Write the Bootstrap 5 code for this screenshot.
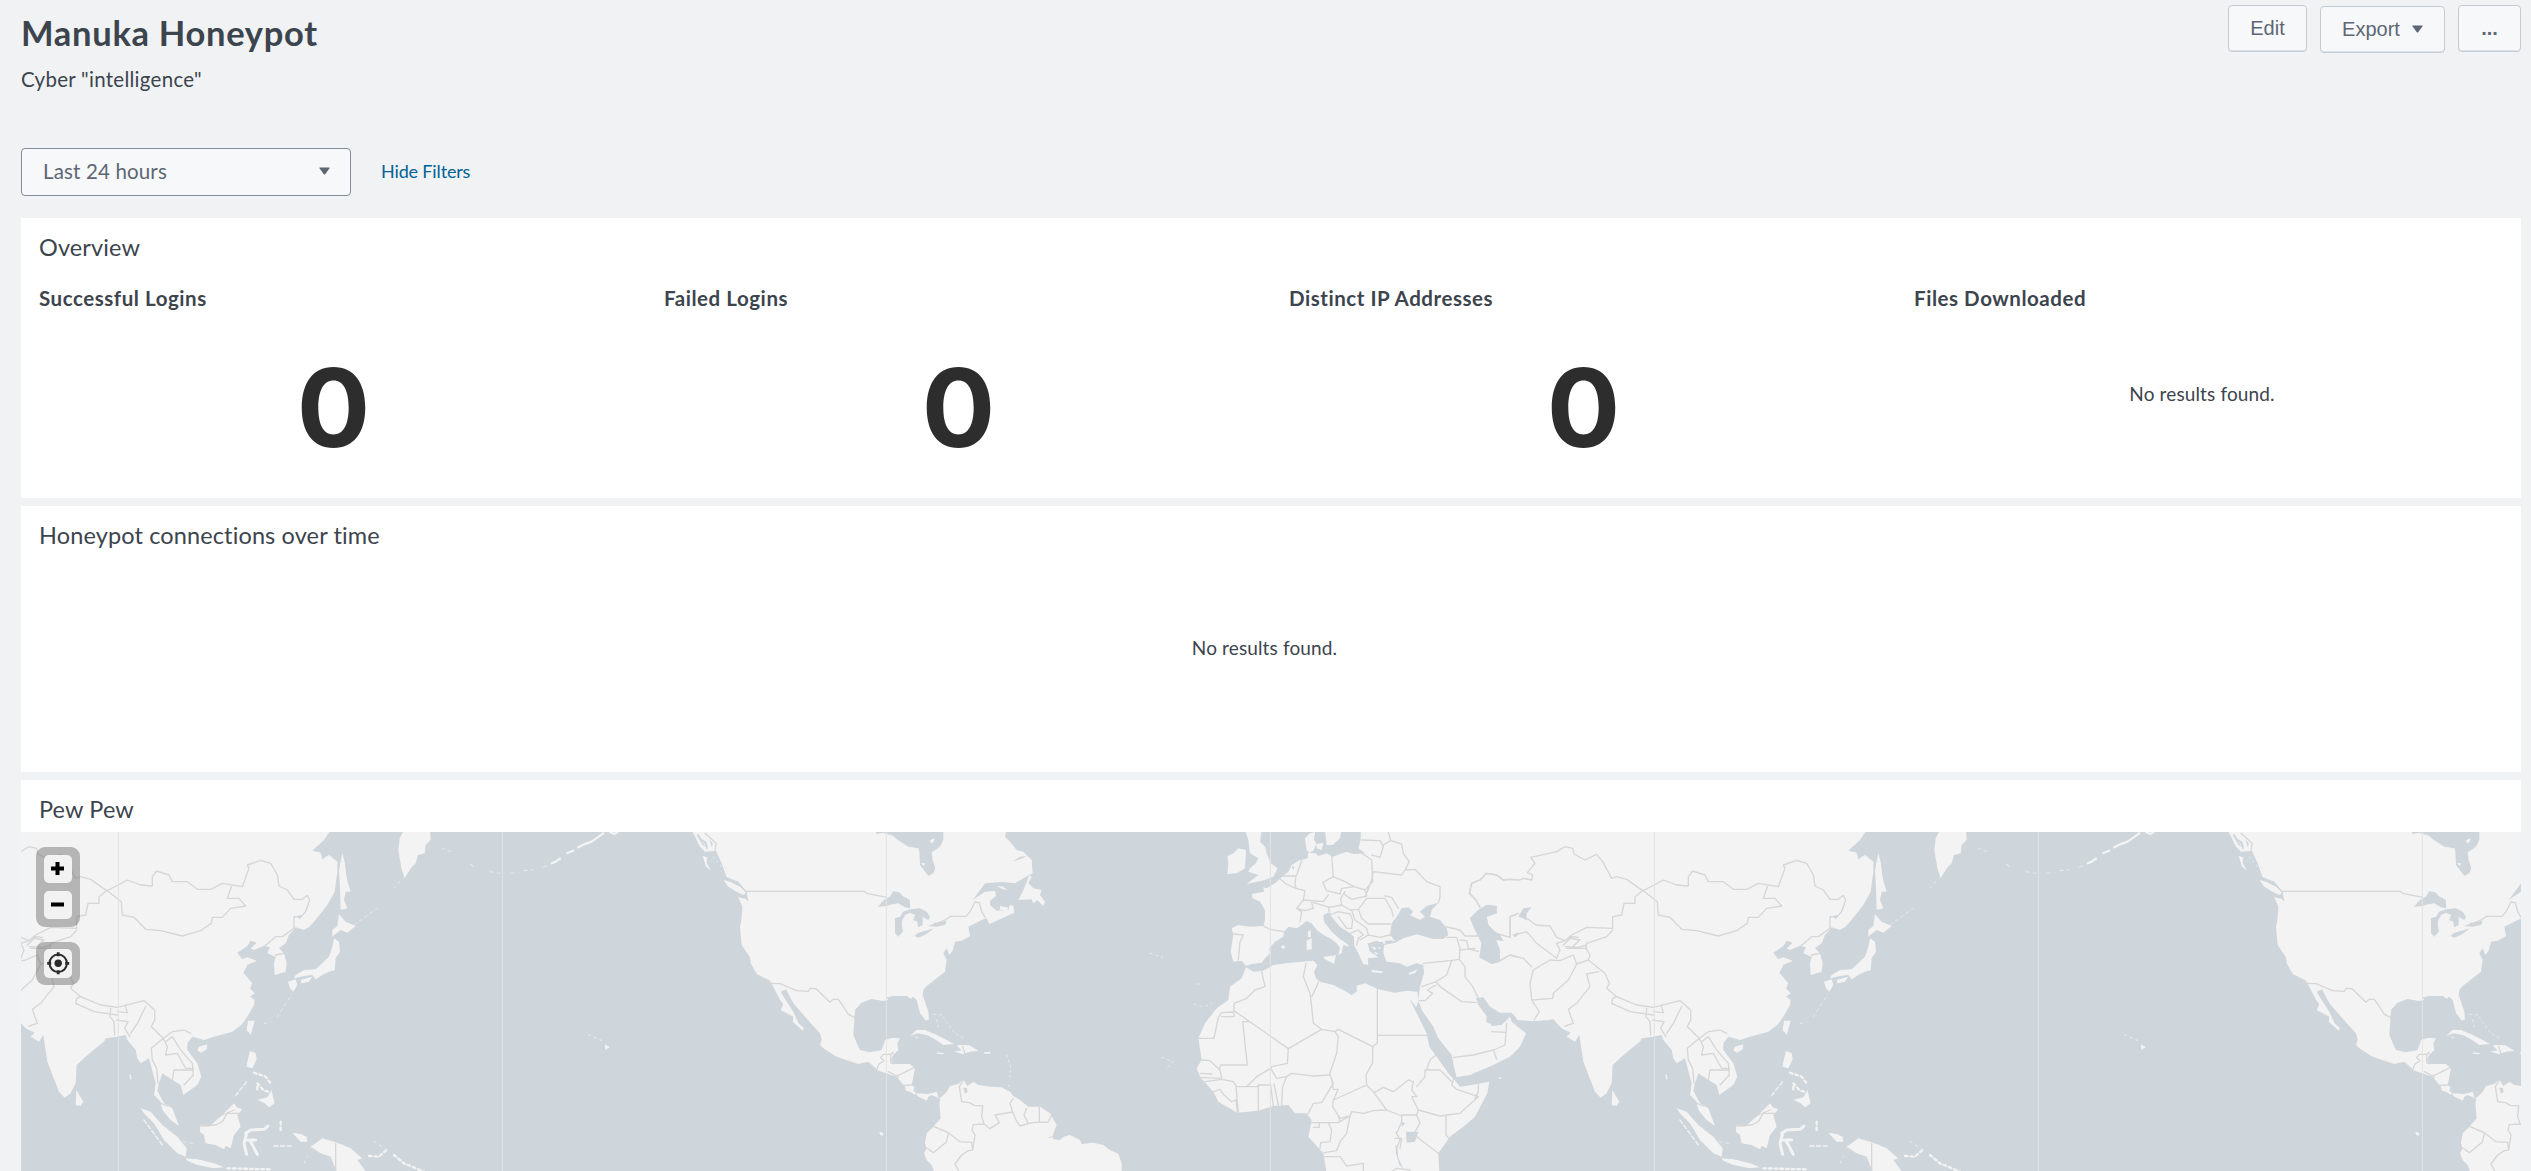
<!DOCTYPE html>
<html lang="en">
<head>
<meta charset="utf-8">
<title>Manuka Honeypot</title>
<link rel="stylesheet" href="https://cdn.jsdelivr.net/npm/bootstrap@5.3.0/dist/css/bootstrap.min.css">
<style>
body{background:#f0f2f4;color:#3c444d;font-family:Lato,"Open Sans",sans-serif;height:1171px;overflow:hidden;font-size:20px;font-variant-ligatures:none}
.dash{padding:0 10px 0 21px;height:1171px}
.dash-top{height:148px}
.dash-title{font-size:34.5px;line-height:40px;font-weight:700;padding-top:13px;margin:0;letter-spacing:.7px}
.dash-desc{font-size:20.5px;line-height:26px;margin:13px 0 0;letter-spacing:.27px}
.tools{gap:13px;padding-top:5px}
.tool-btn{height:47px;border:1px solid #c3cbd4;border-radius:4px;background:#f7f8fa;color:#5c6773;font-family:"Liberation Sans",Arial,sans-serif;font-size:20px;line-height:26px;padding:0 0 2px;box-shadow:inset 0 -1px 0 #dfe3e8}
.w-edit{width:79px}.w-export{width:125px;margin-top:1px}.w-more{width:63px;font-weight:700}
.tri{width:11px;height:8px;fill:#5c6773;display:block}
.range{width:330px;height:48px;border:1px solid #818d99;border-radius:4px;background:#f7f8fa;color:#5c6773;font-size:20.5px;padding:0 20px 2px 21px;letter-spacing:.15px}
.hide-link{color:#006297;font-size:18px;line-height:26px;margin:0 0 2px 30px;text-decoration:none;letter-spacing:-.15px}
.panel{background:#fff}
.panel-name{font-size:23.5px;line-height:30px;font-weight:400;margin:0;padding:14px 18px 0;letter-spacing:.13px}
.p-one{height:280px;margin-top:22px}.p-two{height:266px;margin-top:8px}.p-three{margin-top:8px}
.metric-name{font-size:20.5px;line-height:26px;font-weight:700;margin:0;padding:23px 18px 1px;letter-spacing:.55px}
.big{font:700 109px/110px Inter,sans-serif;color:#2d2d2d;padding-top:40px}
.none{font-size:19px;line-height:26px;letter-spacing:.13px}
.m-none{padding-top:69px;padding-right:13px}
.t-none{padding-top:85px;padding-right:13px}
.map-box{height:339px;margin-top:8px;background:#ced5db;position:relative}
.map-box>svg{display:block}
.ctl{position:absolute;left:15px;width:44px;border-radius:9px;background:rgba(110,110,110,.47);padding:8px;display:flex;flex-direction:column;gap:8px}
.c-zoom{top:15px;height:80px}.c-loc{top:110px;height:43px;padding-top:7px}
.ctl button{width:28px;height:28px;padding:0;border:0;border-radius:5px;background:rgba(247,247,247,.92);display:block}
.c-loc button{height:29px}
.ctl svg{display:block}
</style>
</head>
<body>
<main class="dash d-flex flex-column">
  <header class="dash-top d-flex justify-content-between align-items-start">
    <div><h1 class="dash-title">Manuka Honeypot</h1><p class="dash-desc">Cyber "intelligence"</p></div>
    <div class="tools d-flex">
      <button class="tool-btn w-edit">Edit</button>
      <button class="tool-btn w-export d-flex align-items-center justify-content-center gap-2">Export <svg class="tri ms-1" viewBox="0 0 11 8"><path d="M.8.5h9.4q.8 0 .3.8L6.2 7.2q-.7.8-1.4 0L.5 1.3Q0 .5.8.5Z"/></svg></button>
      <button class="tool-btn w-more">...</button>
    </div>
  </header>
  <div class="d-flex align-items-center">
    <button class="range d-flex align-items-center justify-content-between">Last 24 hours<svg class="tri" viewBox="0 0 11 8"><path d="M.8.5h9.4q.8 0 .3.8L6.2 7.2q-.7.8-1.4 0L.5 1.3Q0 .5.8.5Z"/></svg></button>
    <a class="hide-link" href="#">Hide Filters</a>
  </div>
  <section class="panel p-one">
    <h2 class="panel-name">Overview</h2>
    <div class="row g-0">
      <div class="col-3"><h3 class="metric-name">Successful Logins</h3><div class="big text-center">0</div></div>
      <div class="col-3"><h3 class="metric-name">Failed Logins</h3><div class="big text-center">0</div></div>
      <div class="col-3"><h3 class="metric-name">Distinct IP Addresses</h3><div class="big text-center">0</div></div>
      <div class="col-3"><h3 class="metric-name">Files Downloaded</h3><div class="none m-none text-center">No results found.</div></div>
    </div>
  </section>
  <section class="panel p-two d-flex flex-column">
    <h2 class="panel-name">Honeypot connections over time</h2>
    <div class="none t-none text-center">No results found.</div>
  </section>
  <section class="panel p-three">
    <h2 class="panel-name">Pew Pew</h2>
    <div class="map-box">
      <svg width="2500" height="339" viewBox="21 832 2500 339">
        <defs>
          <g id="world" stroke-linejoin="round" stroke-linecap="round">
            <!-- Americas -->
            <g transform="translate(680 820) scale(.33333)">
              <path fill="#f3f3f3" d="M35 30 60 80 75 95 108 92 125 130 140 172 175 185 200 215 205 245 196 236 175 232 187 260 184 300 180 320 185 375 210 412 212 430 230 462 270 482 290 520 300 540 310 552 302 570 340 590 338 605 350 615 368 632 372 625 355 608 340 575 320 545 302 515 318 508 330 530 340 550 375 590 420 640 425 660 420 675 430 685 470 710 535 732 565 725 595 752 650 770 675 800 678 812 690 815 712 828 740 842 745 830 755 825 770 832 780 840 778 850 782 895 760 920 740 940 735 970 740 985 732 1000 740 1020 755 1035 765 1060 1325 1060 1325 1030 1315 1002 1290 990 1270 975 1240 968 1205 972 1200 960 1170 945 1150 950 1140 960 1120 958 1118 945 1130 915 1110 880 1080 860 1045 860 1020 840 1000 828 990 815 965 802 930 800 895 795 880 786 862 798 850 778 835 792 810 798 800 815 785 830 778 835 770 815 745 822 710 820 700 812 703 800 695 795 700 770 705 745 690 732 640 732 632 720 640 705 655 690 652 670 660 655 635 654 615 660 605 690 570 697 540 690 535 680 520 645 525 570 545 548 575 537 610 543 625 540 620 532 640 528 680 528 692 536 700 530 710 540 715 560 720 580 738 602 747 598 745 575 728 525 730 510 740 498 795 455 800 420 790 400 800 385 808 405 818 392 825 365 845 362 870 348 865 320 910 298 920 295 928 312 955 300 1003 278 1000 258 990 255 985 270 950 272 930 255 930 242 948 228 945 212 915 215 870 245 860 262 882 235 915 190 965 186 1005 190 1030 175 1058 160 1055 120 1030 95 1010 90 990 65 975 50 980 30 790 30 790 60 780 80 755 97 758 120 766 145 760 160 745 168 720 135 718 95 715 85 685 80 650 58 640 48 610 38 590 42 585 30Z"/>
              <g fill="#f3f3f3"><path d="M130 180 150 185 180 200 198 218 190 225 170 215 145 200ZM68 108 82 112 80 130 94 152 78 140ZM1048 165 1055 170 1045 190 1060 205 1085 210 1080 225 1095 245 1090 258 1072 240 1060 250 1055 238 1015 240 1028 215ZM950 197 970 200 982 210 965 206ZM960 258l25 5-4 8-22-2ZM750 60l14-5-3 10-8 6ZM722 130l14 0-5 8ZM690 648 710 630 735 630 770 645 800 660 822 672 790 675 760 655 740 645 712 640ZM770 697l25 3-10 3-13-2ZM830 675 868 676 895 692 870 695 848 703 822 694 845 692ZM912 696l20 0-2 6-16-1ZM705 650l8 0-2 6ZM598 936l12 2-2 10-8-4Z"/>
              <path fill="none" stroke="#e6e9eb" stroke-width="3" stroke-dasharray="6 10" d="M762 583 785 585 820 635 850 655M770 600l5 20M980 705 992 740 990 770M985 795l4 8M100 110l25 30 20 5"/></g>
              <g fill="#ced5db"><path d="M593 260 612 240 630 230 640 213 660 218 668 228 690 240 690 265 675 262 655 250 640 252 620 258ZM645 295 660 290 670 275 690 268 720 265 740 275 750 290 745 300 728 290 728 315 714 322 712 305 700 300 705 285 690 278 675 285 665 305 668 335 655 350 645 340ZM703 348 715 338 745 330 762 325 740 342 715 353ZM750 318 765 308 800 302 795 315 770 320ZM1000 124 1020 110 1040 108 1020 118ZM850 803l10 0 3 12-8 6ZM1102 955l16-8 0 5ZM50 45l6-3 20 38-8-5ZM62 55l18 12 4 20-4 1-6-17ZM88 60l10 10-2 12-4-10Z"/></g>
              <g fill="none" stroke="#d6d6d6" stroke-width="4"><path d="M198 214H553L560 220 620 232M270 490 300 491 350 512 385 514 390 505 408 506 450 547 460 538 475 538 490 560 505 583 524 592M750 318 795 300 812 289 858 289 870 275 885 246 898 248 905 275 915 292M75 40 108 70 105 95M590 750 597 732 612 723 602 712 610 703 632 703 632 728 640 732M632 703 640 698M625 755 650 768 672 758 704 742M650 768 655 772M672 796 697 795M708 815 710 828M848 680 855 702M850 780 838 800 845 845 868 848 885 857 908 857 905 890 912 912 880 914 876 930 885 945 878 990 865 992 845 1005 825 1032 840 1060M912 912 930 926 958 908 945 885 998 876 990 850 1000 835M998 876 1008 900 1020 918 1055 908 1105 906 1115 885M1040 865 1032 885 1045 910M1078 862 1078 905M762 920 805 938 840 965 875 967 878 990M805 938 800 965 760 998 742 985M775 828 780 840"/></g>
            </g>
            <!-- Europe, Africa, Middle East -->
            <g transform="translate(1150 820) scale(.33333)">
              <g fill="#f3f3f3">
              <path d="M632 30V60L625 85 645 100 610 102 590 95 548 110 530 100 505 108 497 100 478 98 470 90 465 55 480 40 495 36 492 60 500 72 490 92 475 98 472 115 445 122 425 135 415 155 395 172 375 190 350 205 340 202 342 215 305 222 308 235 330 245 345 270 345 300 340 318 300 320 265 315 245 325 250 345 242 395 250 425 275 422 288 438 305 432 335 428 345 415 360 400 358 385 375 365 400 350 402 335 415 320 440 325 455 315 470 303 485 310 500 330 520 345 540 355 560 370 570 385 565 405 575 400 580 375 598 380 590 370 570 358 545 335 522 305 520 285 535 278 545 290 570 320 600 340 612 350 612 375 625 400 640 432 655 435 653 415 685 412 665 390 655 370 680 362 700 372 735 362 720 345 725 310 740 290 755 265 775 262 790 275 780 285 810 300 825 290 810 275 830 258 865 248 845 270 840 290 870 300 890 325 895 345 880 357 850 357 800 343 760 355 735 368 702 375 700 400 710 425 750 430 770 440 800 430 820 435 822 460 810 500 805 540 815 570 850 620 865 655 905 705 912 740 920 772 960 765 1030 735 1080 710 1110 680 1128 640 1105 622 1085 605 1080 590 1055 615 1025 618 1015 595 985 555 978 535 1000 532 1020 560 1050 578 1085 578 1100 595 1150 602 1200 600V30Z"/>
              <path d="M288 442 310 455 340 452 370 435 420 428 490 422 502 435 492 455 498 475 510 485 550 495 580 510 605 525 620 515 620 497 645 490 685 508 735 518 770 512 802 515 806 545 798 562 792 552 778 535 795 570 830 640 838 680 860 710 895 760 918 785 930 800 960 796 1018 785 1012 820 975 890 940 920 900 950 865 1000 868 1060 530 1060 520 1000 475 950 485 900 470 880 435 880 415 855 370 858 325 872 262 878 205 845 190 815 150 770 140 745 155 720 145 655 165 610 200 565 235 540 240 500 275 475ZM285 30H335L330 65 345 80 350 100 362 130 383 145 370 170 345 180 290 192 325 165 295 155 300 145 318 130 325 115 300 100 295 60ZM265 85 288 90 285 145 260 160 232 162 235 130 232 108 250 100ZM525 30H575L570 55 548 75 530 75ZM500 72 520 68 515 90 500 85ZM470 362 485 355 485 388 470 390ZM474 335 482 330 482 352 474 350ZM520 410 558 406 552 432 525 418ZM665 450 698 454 695 460 665 456ZM775 460 803 448 795 460 778 464ZM393 380l8-4 5 6-8 6ZM1045 772l12 2-8 4ZM700 392l8 5-6 3ZM420 375l8 1Z"/>
              <path fill="none" stroke="#e6e9eb" stroke-width="3" stroke-dasharray="7 11" d="M133 552 160 562 185 550M140 492h8M35 712 70 725 52 742M0 400l38 12"/></g>
              <path fill="#ced5db" d="M960 295 985 270 1010 255 1040 258 1040 280 1010 290 1015 315 1035 335 1050 345 1060 362 1038 360 1050 390 1050 425 1025 432 988 412 995 370 975 330ZM1105 290 1120 265 1145 262 1130 280 1128 302 1118 295ZM1090 348l12-10 4 4-8 8ZM652 370 700 365 698 405 685 412 660 395ZM705 362l25-1-8 8-16 0ZM768 935 805 935 800 950 795 965 770 968ZM755 905 765 910 755 922ZM736 975 742 980 745 1015 760 1045 748 1035 738 1000ZM735 935h6l0 10ZM425 138l8 2-3 12ZM1010 590 1022 596 1020 612 1008 605Z"/>
              <path fill="#f3f3f3" d="M662 378l18 6-6 6ZM672 396l14 4-8 4ZM685 380l8 4-6 4Z"/>
              <g fill="none" stroke="#d6d6d6" stroke-width="4"><path d="M388 175 408 192 438 205 465 212 460 240 440 265 455 275 450 305M395 168 438 168 435 190 438 205M455 122 440 165M545 108 550 170 518 188 530 212 570 222 575 205 612 200 645 210 668 185 665 120 625 92M550 170 585 185 612 200M460 240 520 245 535 225M440 265 465 272 490 265 485 248M490 248 540 262 575 255 572 235 585 215M645 210 650 228 605 238 582 222M575 255 600 270 625 268 650 235 705 235 725 270 730 290M705 228 725 232 745 265M625 268 635 295 655 312 722 312M535 262 540 285 565 275 600 282 608 300 605 325 590 325 565 290M605 270 615 300 650 325 655 345 690 352 720 345M600 340 625 330 640 345 625 355 620 375M655 345 630 360M340 318 360 328 402 335M250 342 280 345 270 365 265 420M635 60 690 62 700 80 690 112 665 105M715 36 722 62 755 72 760 100 778 125 765 150 755 165 670 155M722 62 700 75M765 150 795 148 830 185 870 200 870 232 865 248M670 155 665 180 648 225M878 318 930 330 945 348 990 348M890 352 920 352 930 385 928 418 900 422 820 430M930 360 950 362 955 385 985 395M930 390 950 388 975 385M928 418 945 440 945 470 968 500 985 535M905 422 890 465 858 485 815 500M858 485 870 500 935 545 978 548M858 495 832 510 848 520 825 542 808 542M1025 635 1068 637 1070 610M1068 637 1065 675 1030 690 970 705 910 712M1030 690 1040 718M990 262 978 240 958 220 965 190 990 180 1010 160 1040 165 1060 180 1080 178 1110 180 1120 175 1145 180 1132 158 1155 130 1142 112 1200 100M1080 352V290L1110 280M1080 352 1040 340M1130 295 1160 318 1200 320M1100 340 1130 335 1160 370 1200 400M1050 422 1080 405 1120 415 1148 440 1200 420M1148 445 1138 490 1145 540 1200 540M1145 540 1168 575 1155 600"/>
              <path d="M335 455 345 500 315 510 290 535 252 550V590H215M145 655H192L205 592 215 578 250 576M252 572 415 686 515 628 490 610 485 560 480 520 460 470 468 430M485 530 500 500 505 485M515 628 555 635 565 628 668 680V728L648 765 650 795 672 818 710 870M682 508V668L668 680M682 646H830M415 686 412 730 365 740 362 745 380 775 410 770 425 760 490 768 538 765 560 700 565 650 555 635M278 605 292 735H212L208 750M278 605H298M155 720 180 722 210 750 215 775 150 772M150 760 185 762M165 785 215 778 250 785 260 800 290 800 320 770 362 745M190 815 210 808 222 825 245 845 258 840 262 875M258 800 265 878M325 872 325 795 362 795 370 858M372 792 385 855M325 795 320 800 290 800M395 855 398 800 410 770M475 880 490 850 515 848 550 790 540 765M545 780 550 808 565 808 550 840 548 860 570 895 600 888 605 875 640 880 670 872 710 870M550 840 650 795M672 818 700 802 730 815 775 780 790 785 785 810 800 830 785 830 805 870 870 888 930 880 985 830 920 808 905 795 912 775M755 885 800 885 805 870M825 750 870 750 905 785M825 750 825 770 800 800M830 748 840 720 858 705M985 790V815L975 835M930 880 888 885V945L897 955M800 885 810 910 795 935M800 950 865 1000M710 870 755 888 755 905 740 940 750 960 740 985M485 908H565L600 888 590 940 570 965 560 992 522 998M535 908 545 930 540 965 512 968 510 985M490 922H508V908M522 1010 570 1010 590 1038 640 1030V1055M735 955 755 955 750 985M725 1055 740 1045 780 1050M565 890 570 905"/></g>
            </g>
            <!-- Central, South and East Asia -->
            <g transform="translate(1450 820) scale(.33333)">
              <g fill="#f3f3f3">
              <path d="M200 30H1250L1230 60 1195 92 1220 98 1225 118 1245 105 1270 125 1270 155 1262 215 1240 255 1200 305 1185 322 1170 330 1145 322 1125 345 1115 370 1095 385 1110 400 1118 430 1115 455 1082 465 1080 430 1085 410 1060 400 1068 382 1050 378 1020 390 1010 385 1028 368 1010 362 1000 378 970 398 985 418 1000 412 1028 422 1000 435 988 458 1015 490 1008 505 1022 520 1008 530 1022 540 1020 555 1000 590 985 612 955 635 900 650 870 660 835 650 820 670 820 690 850 730 862 770 850 795 808 825 800 795 775 780 745 760 735 790 730 812 750 850 775 865 795 918 770 900 745 870 740 845 720 825 725 790 705 715 680 730 670 715 665 690 640 660 635 645 610 650 575 655 570 665 545 685 515 710 488 735 485 790 470 820 452 833 435 815 400 725 388 645 375 665 350 650 362 638 335 625 310 598 250 604 200 600Z"/>
              <path d="M680 865 710 875 745 915 790 950 818 985 815 1010 790 1000 750 960 720 910 690 880ZM815 1015 850 1018 900 1030 930 1042 900 1045 850 1035 820 1022ZM858 915 885 920 925 885 960 850 968 862 985 868 970 885 980 920 960 945 950 985 935 978 930 988 905 975 875 970 870 945 858 935ZM487 810 508 845 500 858 485 855ZM855 680 880 673 878 688 860 698 850 690ZM1002 602 1022 602 1010 645 998 630ZM1008 693 1025 700 1028 718 1015 745 998 740 1000 725ZM1030 840 1060 832 1072 810 1082 850 1065 862 1050 848ZM1190 980 1225 955 1270 968 1310 985 1345 1015 1330 1020 1360 1060 1270 1060 1250 1010 1220 1000ZM1135 938 1160 942 1178 950 1180 965 1160 965ZM1260 355 1275 365 1278 395 1265 415 1262 450 1245 455 1230 462 1205 478 1195 465 1170 468 1140 475 1145 465 1170 450 1205 448 1245 410 1255 380ZM1275 282 1295 305 1325 318 1300 338 1280 330 1255 350 1255 330 1270 318ZM1122 485 1145 478 1150 495 1138 515 1128 505ZM1160 480 1195 470 1185 485 1162 490ZM1285 100 1292 125 1298 175 1310 215 1295 215 1290 240 1300 265 1280 270 1278 200 1275 150ZM1470 30H1548L1550 60 1535 75 1532 100 1512 105 1505 130 1490 145 1472 175 1462 145 1453 90 1457 55Z"/></g>
              <g fill="none" stroke="#f3f3f3" stroke-width="9"><path d="M995 940 1010 930 1050 928 1062 918M998 940 990 970 998 1003M1000 960 1025 960M1010 965 1030 1003"/><path stroke-width="4" d="M965 827 998 785M648 765l4 18M1080 978h60M690 900 745 975" stroke-dasharray="12 8"/><path stroke-width="7" stroke-dasharray="8 9" d="M1020 758 1055 770 1070 790M1030 790 1050 812 1065 815M1030 800v10M1100 905v30M940 1045 1070 1048M1365 1008 1395 1010 1415 992M1440 1005 1470 1030 1530 1055"/><path stroke="#e6e9eb" stroke-width="3" stroke-dasharray="8 12" d="M1320 315 1390 265M1440 205 1462 180M1585 85 1610 95M1670 133 1680 140M1090 590 1135 520M1380 965 1420 990M1170 1030l10-20M808 965 845 972M1050 610l20-3"/></g>
              <path fill="#ced5db" d="M60 295 85 270 110 255 140 258 140 280 110 290 115 315 135 335 150 345 160 362 138 360 150 390 150 425 125 432 88 412 95 370 75 330ZM205 290 220 265 245 262 230 280 230 302 220 295ZM190 348l12-10 4 4-8 8ZM1148 288 1165 284 1158 298Z"/>
              <g fill="none" stroke="#d6d6d6" stroke-width="4"><path d="M90 262 78 240 58 220 65 190 90 180 110 160 140 165 160 180 180 178 210 180 220 175 245 180 248 165 232 158 255 130 242 112 320 95 345 80 368 85 372 102 405 120 440 103 458 125 485 175 500 170 530 178 578 212 555 230V250H522L515 285 488 290V325L410 322 365 345 345 362 320 352 300 318 258 315 230 295M180 352V290L205 280M580 212 640 180 680 195 715 198V170L728 153 765 165 775 185 820 185 850 208 890 208 925 190 985 200 1005 145 1000 135 1040 121 1070 130 1090 165 1095 198 1120 210 1140 238 1165 238 1180 226 1187 240 1175 275 1160 292 1140 290V325L1105 350 1085 350 1050 380M580 212 622 245 625 285 660 292 695 328 740 332 805 348 860 332 892 310 895 292 925 292 950 265 995 258 975 235 940 235 952 200M1085 405 1108 400M488 330 470 350 410 370 408 385 420 405 415 420 440 440 465 460 478 490 470 505 500 530 560 555 610 562 690 542 722 570V600L712 620 748 655 775 635 810 630 830 640M488 535 485 550 540 575 610 585M500 530 488 535M415 420 380 432 355 480 310 520 308 535 245 540M245 540 268 575 252 600M380 432 370 405 330 422 300 420 250 450 240 490 245 540M150 422 180 405 220 415 245 440M190 345 230 335 260 370 320 415M320 415 330 390 320 370 345 362M345 380 385 382 410 375M360 355 390 360 370 378M340 375 365 350 385 352M408 385 350 385M445 455 410 462 420 500 380 550 355 568 370 610 345 618M590 565 588 590 600 605 602 645M610 575 640 578 635 560M608 600 642 605 632 625 648 650M695 560 670 610 650 640M748 655 712 685 715 720 728 745 732 790M748 655 760 680 755 705 790 700 815 745H838M755 665 775 650 800 690 835 730 838 765 810 795M775 780 780 750H838M740 850l20 8M860 918 905 915 925 905 940 880 975 880M925 885 960 870M1265 970V1060"/></g>
            </g>
            <!-- Aleutians and Hawaii, east of the date line -->
            <g transform="translate(400 820) scale(.33333)" fill="none" stroke="#f3f3f3"><path stroke-width="7" d="M502 99 520 92M535 82 550 74 575 65 610 40M630 36l12 6 10-5M455 130l14-6M474 120l6-4"/><path stroke="#e6e9eb" stroke-width="3" stroke-dasharray="10 12" d="M212 133 225 143M270 155 300 160M332 159H355M372 152 400 149M430 141 450 135"/><path stroke="#e6e9eb" stroke-width="4" stroke-dasharray="4 14" d="M567 645 590 655 612 665"/><path fill="#f3f3f3" stroke="none" d="M615 673 630 681 616 689Z"/></g>
            <path fill="none" stroke="#e3e3e1" d="M502.4 800V1200M886.4 800V1200M1270.4 800V1200M1654.4 800V1200"/>
          </g>
        </defs>
        <use href="#world" x="-1536"/><use href="#world"/><use href="#world" x="1536"/>
      </svg>
      <div class="ctl c-zoom">
        <button aria-label="Zoom in"><svg width="28" height="28"><path fill="#000" d="M11.5 7h4v4.5H20v4h-4.500V20h-4v-4.500H7v-4h4.500Z"/></svg></button>
        <button aria-label="Zoom out"><svg width="28" height="28"><path fill="#000" d="M7 11.500h13v4H7Z"/></svg></button>
      </div>
      <div class="ctl c-loc"><button aria-label="Locate"><svg width="28" height="29"><circle cx="14.200" cy="14.300" r="8.700" fill="none" stroke="#2b2b2b" stroke-width="2"/><circle cx="14.200" cy="14.300" r="3.700" fill="#2b2b2b"/><path d="M14.200 3.300v4M14.200 21.300v4M3.200 14.300h4M21.200 14.300h4" stroke="#2b2b2b" stroke-width="2.800"/></svg></button></div>
    </div>
  </section>
</main>
<script src="https://cdn.jsdelivr.net/npm/bootstrap@5.3.0/dist/js/bootstrap.bundle.min.js"></script>
</body>
</html>
